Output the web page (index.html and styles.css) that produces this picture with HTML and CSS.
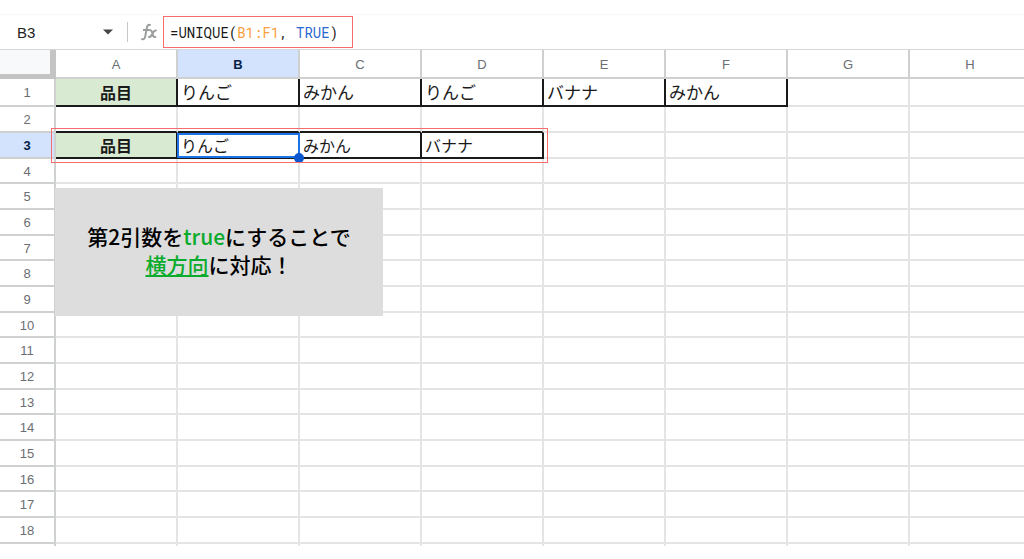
FILE: index.html
```html
<!DOCTYPE html>
<html lang="ja">
<head>
  <meta charset="UTF-8" />
  <meta name="viewport" content="width=device-width, initial-scale=1.0"/>
  <title>UNIQUE関数</title>
  <link rel="stylesheet" href="styles.css">
</head>
<body>
  <div class="formula-bar">
    <button class="name-box" type="button">
      B3
      <svg class="arrow" viewBox="0 0 10 6"><path d="M0 0.5h10L5 5.5z"/></svg>
    </button>
    <svg class="fx" viewBox="0 0 18 18" aria-hidden="true">
      <path d="M10.6 2.4C8.6 1 7.3 2.2 6.9 4.6L5.2 13.6C4.8 15.9 3.4 17 1.4 15.9M3 7h6.6"/>
      <path d="M9.3 7.4c1.6-.7 2.3.2 2.8 2l.9 3c.5 1.6 1.5 2.1 3 1.2M16.6 7.6c-1.4-.6-2.2 0-3.2 1.6l-2.2 3.4c-.9 1.4-1.8 1.8-3 1.1"/>
    </svg>
    <div class="formula"><span>=UNIQUE(</span><span class="range">B1:F1</span><span>, </span><span class="bool">TRUE</span><span>)</span></div>
  </div>

  <div class="sheet">
    <table>
      <colgroup><col class="num"><col span="8" class="col"></colgroup>
      <thead>
        <tr><td class="corner"></td><th>A</th><th class="active">B</th><th>C</th><th>D</th><th>E</th><th>F</th><th>G</th><th>H</th></tr>
      </thead>
      <tbody>
        <tr class="data first"><th>1</th><td class="box label">品目</td><td class="box">りんご</td><td class="box">みかん</td><td class="box">りんご</td><td class="box">バナナ</td><td class="box">みかん</td><td></td><td></td></tr>
        <tr><th>2</th><td class="under"></td><td class="under"></td><td class="under"></td><td class="under"></td><td></td><td></td><td></td><td></td></tr>
        <tr class="data"><th class="active">3</th><td class="box label">品目</td><td class="box selected">りんご</td><td class="box">みかん</td><td class="box">バナナ</td><td></td><td></td><td></td><td></td></tr>
        <tr><th>4</th><td></td><td></td><td></td><td></td><td></td><td></td><td></td><td></td></tr>
        <tr><th>5</th><td></td><td></td><td></td><td></td><td></td><td></td><td></td><td></td></tr>
        <tr><th>6</th><td></td><td></td><td></td><td></td><td></td><td></td><td></td><td></td></tr>
        <tr><th>7</th><td></td><td></td><td></td><td></td><td></td><td></td><td></td><td></td></tr>
        <tr><th>8</th><td></td><td></td><td></td><td></td><td></td><td></td><td></td><td></td></tr>
        <tr><th>9</th><td></td><td></td><td></td><td></td><td></td><td></td><td></td><td></td></tr>
        <tr><th>10</th><td></td><td></td><td></td><td></td><td></td><td></td><td></td><td></td></tr>
        <tr><th>11</th><td></td><td></td><td></td><td></td><td></td><td></td><td></td><td></td></tr>
        <tr><th>12</th><td></td><td></td><td></td><td></td><td></td><td></td><td></td><td></td></tr>
        <tr><th>13</th><td></td><td></td><td></td><td></td><td></td><td></td><td></td><td></td></tr>
        <tr><th>14</th><td></td><td></td><td></td><td></td><td></td><td></td><td></td><td></td></tr>
        <tr><th>15</th><td></td><td></td><td></td><td></td><td></td><td></td><td></td><td></td></tr>
        <tr><th>16</th><td></td><td></td><td></td><td></td><td></td><td></td><td></td><td></td></tr>
        <tr><th>17</th><td></td><td></td><td></td><td></td><td></td><td></td><td></td><td></td></tr>
        <tr><th>18</th><td></td><td></td><td></td><td></td><td></td><td></td><td></td><td></td></tr>
      </tbody>
      <tfoot>
        <tr><th></th><td></td><td></td><td></td><td></td><td></td><td></td><td></td><td></td></tr>
      </tfoot>
    </table>
    <div class="result-frame"></div>
    <p class="note">第2引数を<span>true</span>にすることで<br><u>横方向</u>に対応！</p>
  </div>
</body>
</html>
```
FILE: styles.css
```css
:root {
  --grid: #e4e4e4;
  --head-line: #cfd1d0;
  --ink: #1a1a1a;
  --red: #f76c6c;
  --blue: #1a73e8;
}

* {
  box-sizing: border-box;
}

body {
  font-family: "Liberation Sans", "Noto Sans CJK JP", sans-serif;
  margin: 0;
  padding-top: 14px;
  background-color: #ffffff;
  color: var(--ink);
}

.formula-bar {
  display: flex;
  align-items: center;
  height: 36px;
  border-top: 1px solid #f5f7fa;
  border-bottom: 1px solid #d5d7d9;
}

.name-box {
  display: flex;
  justify-content: space-between;
  align-items: center;
  width: 128px;
  height: 20px;
  padding: 0 14px 0 17px;
  border: 0;
  border-right: 1px solid #c7c7c7;
  background: none;
  color: #222222;
  font-family: inherit;
  font-size: 15px;
}

.arrow {
  width: 10px;
  height: 6px;
  fill: #444746;
}

.fx {
  width: 18px;
  height: 18px;
  margin-left: 12px;
  fill: none;
  stroke: #9a9d9c;
  stroke-width: 2;
}

.formula {
  height: 32px;
  margin-left: 5px;
  padding: 0 14px 0 6px;
  border: 1px solid var(--red);
  font-family: "Roboto Mono", "DejaVu Sans Mono", monospace;
  font-size: 14px;
  line-height: 32px;
  white-space: pre;
}

.range {
  color: #f9a03c;
}

.bool {
  color: #2a66d0;
}

.sheet {
  position: relative;
  overflow: hidden;
}

table {
  width: 1032px;
  table-layout: fixed;
  border-collapse: separate;
  border-spacing: 0;
}

.num {
  width: 56px;
}

.col {
  width: 122px;
}

th,
td {
  height: 26px;
  padding: 0;
  border-right: 2px solid var(--grid);
  border-bottom: 2px solid var(--grid);
  line-height: 20px;
}

th {
  padding-top: 2px;
  border-color: var(--head-line);
  color: #6b6e72;
  font-size: 13px;
  font-weight: normal;
}

thead th,
thead td {
  height: 29px;
}

tfoot th,
tfoot td {
  height: 2px;
  padding: 0;
  border-bottom: 0;
}

.corner {
  border-right: 6px solid #c4c4c4;
  border-bottom: 5px solid #c4c4c4;
  background-color: #f8f9fa;
}

th.active {
  background-color: #d3e3fd;
  color: #041e49;
  font-weight: bold;
}

.first th,
.first td {
  height: 28px;
}

tbody tr:nth-child(3n+4) > * {
  height: 25px;
}

.data td {
  padding-top: 4px;
  padding-left: 3px;
  font-size: 16px;
}

.data .label {
  padding-left: 0;
  background-color: #d9ead3;
  font-weight: bold;
  text-align: center;
}

.data .box {
  border-color: var(--ink);
}

.first .box:not(.label) {
  font-size: 17px;
}

.under {
  border-bottom-color: var(--ink);
}

.selected {
  position: relative;
}

/* selection outline and fill handle sit over the cell borders */
.selected::before {
  content: "";
  position: absolute;
  inset: 0 -2px -1px -1px;
  border: 2px solid var(--blue);
}

.selected::after {
  content: "";
  position: absolute;
  right: -6px;
  bottom: -6px;
  width: 10px;
  height: 10px;
  border-radius: 50%;
  background-color: #0b57d0;
}

.result-frame {
  position: absolute;
  top: 78px;
  left: 51px;
  width: 497px;
  height: 35px;
  border: 1px solid var(--red);
}

.note {
  position: absolute;
  top: 138px;
  left: 55px;
  width: 328px;
  height: 128px;
  margin: 0;
  padding-top: 34px;
  background-color: #dddddd;
  color: #000000;
  font-family: "Noto Sans CJK JP", sans-serif;
  font-size: 21px;
  font-weight: 500;
  line-height: 28px;
  text-align: center;
}

.note span,
.note u {
  color: #0bab2c;
}
```
